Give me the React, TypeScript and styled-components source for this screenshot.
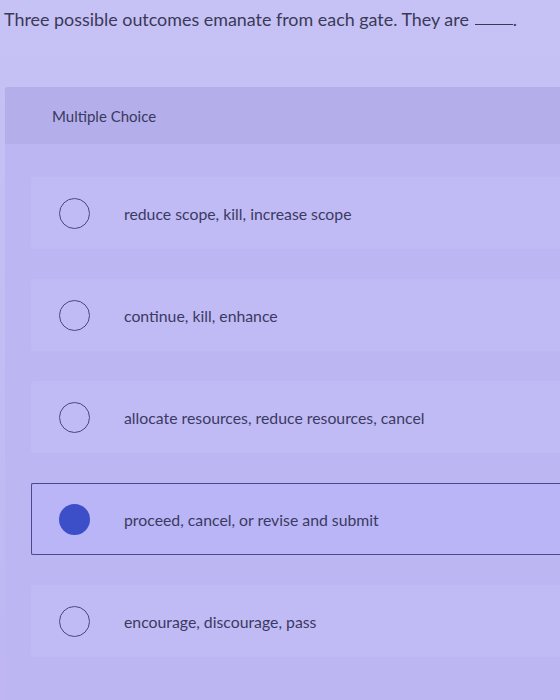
import React from 'react';
import styled, { createGlobalStyle } from 'styled-components';

const GlobalStyle = createGlobalStyle`
  html, body {
    margin: 0;
    padding: 0;
    background: #c3bff3;
    overflow: hidden;
  }
  body {
    font-family: Lato, "Open Sans", sans-serif;
    color: #3b3a5c;
  }
`;

const Page = styled.main`
  width: 560px;
  height: 700px;
  overflow: hidden;
  background: linear-gradient(180deg, #c6c2f5 0%, #c1bcf3 60%, #bfb6f3 100%);
`;

const Question = styled.h1`
  margin: 0;
  padding: 9px 0 0 4px;
  height: 87px;
  box-sizing: border-box;
  font-size: 17.9px;
  font-weight: 400;
  line-height: 21px;
  color: #3a3958;
`;

const Blank = styled.span`
  display: inline-block;
  width: 38px;
  margin-left: 6px;
  border-bottom: 1px solid #3a3958;
  vertical-align: 1px;
`;

const Panel = styled.section`
  margin-left: 5px;
  background: #bcb6f2;
  border-top-left-radius: 3px;
`;

const PanelHeader = styled.header`
  height: 57px;
  padding-left: 47px;
  display: flex;
  align-items: center;
  background: #b4afeb;
  font-size: 15px;
  color: #3a3960;
  border-top-left-radius: 3px;
`;

const Options = styled.div`
  display: flex;
  flex-direction: column;
  gap: 30px;
  padding: 33px 0 60px 26px;
`;

const Option = styled.label<{ $selected?: boolean }>`
  height: 72px;
  box-sizing: border-box;
  display: flex;
  align-items: center;
  gap: 34px;
  padding-left: 27px;
  background: ${p => (p.$selected ? '#b9b5f6' : '#c0bbf5')};
  border: 1px solid ${p => (p.$selected ? '#4b4a8e' : 'transparent')};
  border-right: none;
  border-radius: 2px 0 0 2px;
  font-size: 15.8px;
  color: #3b3a62;
  cursor: pointer;
`;

const Radio = styled.span<{ $checked?: boolean }>`
  width: 31px;
  height: 31px;
  box-sizing: border-box;
  border-radius: 50%;
  flex: none;
  border: ${p => (p.$checked ? 'none' : '1.5px solid #4a4878')};
  background: ${p => (p.$checked ? '#3d4fc8' : 'transparent')};
`;

const options = [
  'reduce scope, kill, increase scope',
  'continue, kill, enhance',
  'allocate resources, reduce resources, cancel',
  'proceed, cancel, or revise and submit',
  'encourage, discourage, pass',
];

const App: React.FC = () => {
  const selected = 3;
  return (
    <Page>
      <GlobalStyle />
      <Question>
        Three possible outcomes emanate from each gate. They are
        <Blank />.
      </Question>
      <Panel>
        <PanelHeader>Multiple Choice</PanelHeader>
        <Options>
          {options.map((o, i) => (
            <Option key={o} $selected={i === selected}>
              <Radio $checked={i === selected} />
              {o}
            </Option>
          ))}
        </Options>
      </Panel>
    </Page>
  );
};

export default App;
